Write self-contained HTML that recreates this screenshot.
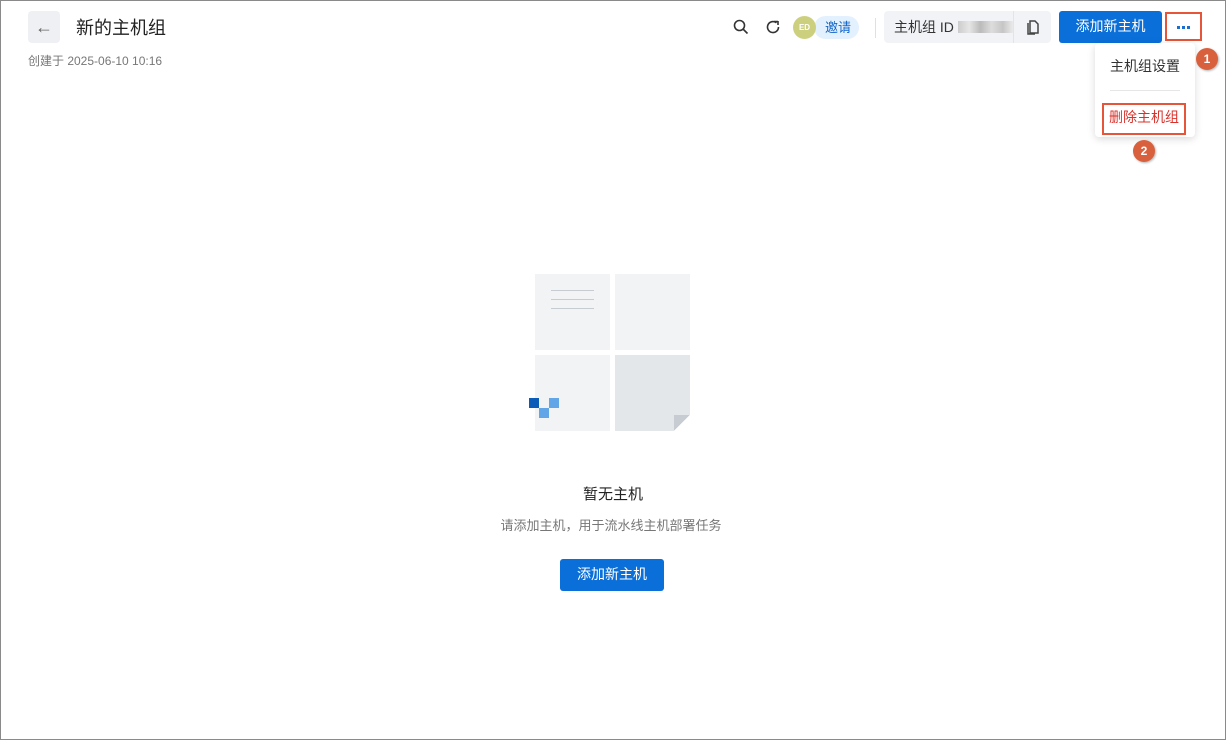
<!DOCTYPE html>
<html><head><meta charset="utf-8"><style>
*{margin:0;padding:0;box-sizing:border-box}
body{width:1226px;height:740px;background:#fff;font-family:"Liberation Sans","Noto Sans CJK SC",sans-serif;position:relative;overflow:hidden}
.a{position:absolute}
.btn{background:#0a6fd8;color:#fff;border-radius:3px;font-size:14px;display:flex;align-items:center;justify-content:center}
.badge{width:22px;height:22px;border-radius:50%;background:#d9603d;color:#fff;font-size:12px;font-weight:bold;display:flex;align-items:center;justify-content:center;box-shadow:1px 1px 2px rgba(0,0,0,.3)}
.tile{position:absolute;background:#f2f3f5}
.d{position:absolute;width:3px;height:3px;background:#1a6fd3;top:26px}
</style></head><body>
<div class="a" style="left:0;top:0;width:1226px;height:740px;border:1px solid #8a8a8a;z-index:9;pointer-events:none"></div>
<div class="a" style="left:28px;top:11px;width:32px;height:32px;background:#eef0f3;border-radius:4px;color:#666;font-size:18px;display:flex;align-items:center;justify-content:center">←</div>
<div class="a" style="left:76px;top:14px;font-size:18px;color:#222">新的主机组</div>
<div class="a" style="left:28px;top:52px;font-size:12px;color:#777">创建于 2025-06-10 10:16</div>

<svg class="a" style="left:733px;top:19px" width="16" height="16" viewBox="0 0 16 16"><circle cx="6.5" cy="6.5" r="5" fill="none" stroke="#333" stroke-width="1.6"/><path d="M10 10l4.5 4.5" stroke="#333" stroke-width="1.6"/></svg>
<svg class="a" style="left:765px;top:19px" width="16" height="16" viewBox="0 0 16 16"><path d="M13.5 8A5.5 5.5 0 1 1 11.5 3.8" fill="none" stroke="#333" stroke-width="1.6"/><path d="M9 2.5h4v-0.5v4" fill="none" stroke="#333" stroke-width="1.6"/></svg>
<div class="a" style="left:814px;top:16px;width:45px;height:23px;background:#e3f0fd;border-radius:12px;color:#1366c9;font-size:13px;line-height:23px;padding-left:11px">邀请</div>
<div class="a" style="left:793px;top:16px;width:23px;height:23px;border-radius:50%;background:#ccd07e;color:#fff;font-size:8px;font-weight:bold;display:flex;align-items:center;justify-content:center">ED</div>
<div class="a" style="left:875px;top:18px;width:1px;height:20px;background:#e0e0e0"></div>
<div class="a" style="left:884px;top:11px;width:167px;height:32px;background:#f1f3f6;border-radius:4px"></div>
<div class="a" style="left:894px;top:17px;font-size:14px;color:#333">主机组 ID</div>
<div class="a" style="left:958px;top:21px;width:56px;height:12px;background:linear-gradient(90deg,#ccc,#e6e6e6,#bbb,#ddd,#c6c6c6,#eee)"></div>
<div class="a" style="left:1013px;top:11px;width:1px;height:32px;background:#e2e4e8"></div>
<svg class="a" style="left:1025px;top:18px" width="16" height="17" viewBox="0 0 16 17"><path d="M5 3h5l3 3v9H5z" fill="none" stroke="#444" stroke-width="1.5"/><path d="M3 5v11h7" fill="none" stroke="#444" stroke-width="1.5"/></svg>
<div class="a btn" style="left:1059px;top:11px;width:103px;height:32px;padding-bottom:2px">添加新主机</div>
<div class="a" style="left:1165px;top:12px;width:37px;height:29px;border:2px solid #e4553a"></div>
<div class="d" style="left:1177px"></div><div class="d" style="left:1182px"></div><div class="d" style="left:1187px"></div>

<div class="a" style="left:1095px;top:43px;width:100px;height:94px;background:#fff;border-radius:4px;box-shadow:0 2px 8px rgba(0,0,0,.15)"></div>
<div class="a" style="left:1110px;top:56px;font-size:14px;color:#333">主机组设置</div>
<div class="a" style="left:1110px;top:90px;width:70px;height:1px;background:#e6e6e6"></div>
<div class="a" style="left:1102px;top:103px;width:84px;height:32px;border:2px solid #e4553a"></div>
<div class="a" style="left:1109px;top:107px;font-size:14px;color:#d9322b">删除主机组</div>
<div class="a badge" style="left:1196px;top:48px">1</div>
<div class="a badge" style="left:1133px;top:140px">2</div>

<div class="tile" style="left:535px;top:274px;width:75px;height:76px"></div>
<div class="tile" style="left:615px;top:274px;width:75px;height:76px"></div>
<div class="tile" style="left:535px;top:355px;width:75px;height:76px"></div>
<div class="tile" style="left:615px;top:355px;width:75px;height:76px;background:#e4e7ea"></div>
<div class="a" style="left:551px;top:290px;width:43px;height:1px;background:#c7ccd3"></div>
<div class="a" style="left:551px;top:299px;width:43px;height:1px;background:#c7ccd3"></div>
<div class="a" style="left:551px;top:308px;width:43px;height:1px;background:#c7ccd3"></div>
<div class="a" style="left:674px;top:415px;width:16px;height:16px;background:linear-gradient(135deg,#c6ccd2 50%,#fff 50%)"></div>
<div class="a" style="left:529px;top:398px;width:10px;height:10px;background:#0b5cb8"></div>
<div class="a" style="left:549px;top:398px;width:10px;height:10px;background:#63a6e8"></div>
<div class="a" style="left:539px;top:408px;width:10px;height:10px;background:#63a6e8"></div>

<div class="a" style="left:0;width:1226px;top:483px;text-align:center;font-size:15px;color:#222">暂无主机</div>
<div class="a" style="left:-2px;width:1226px;top:515px;text-align:center;font-size:13px;color:#777">请添加主机，用于流水线主机部署任务</div>
<div class="a btn" style="left:560px;top:559px;width:104px;height:32px;padding-bottom:2px">添加新主机</div>
</body></html>
